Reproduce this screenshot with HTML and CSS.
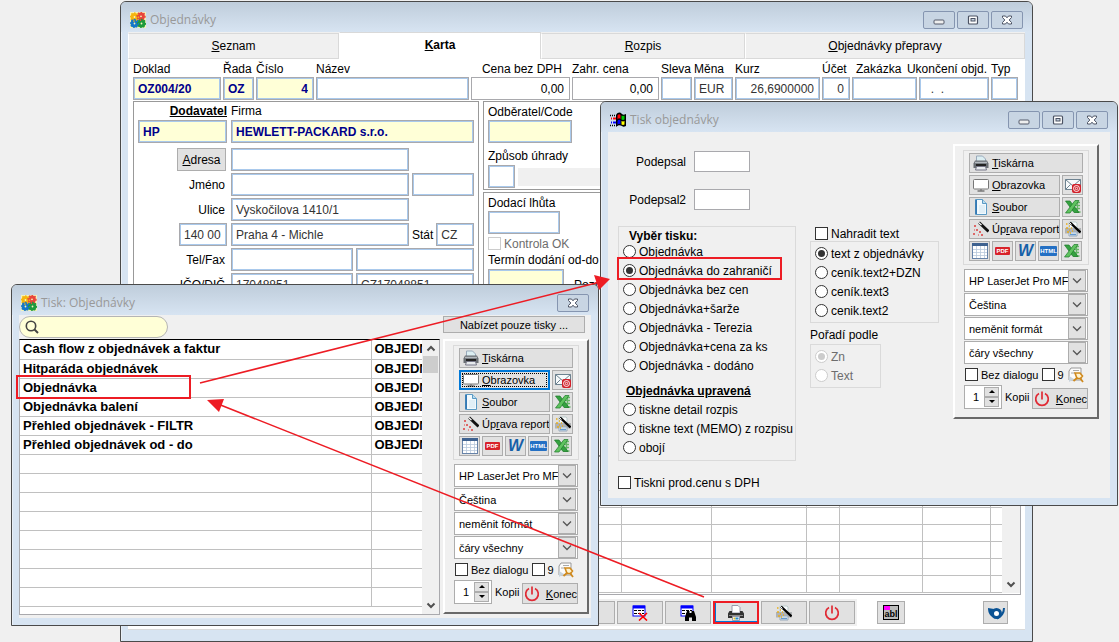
FILE: index.html
```html
<!DOCTYPE html>
<html lang="cs">
<head>
    <meta charset="UTF-8">
    <meta name="viewport" content="width=device-width, initial-scale=1.0">
    <title>Objednávky</title>
    <link rel="stylesheet" href="styles.css">
</head>
<body>

<!-- shared icons -->
<svg class="sprite" aria-hidden="true">
    <symbol id="i-app" viewBox="0 0 16 16">
        <rect width="16" height="16" fill="#f6f3b8"/>
        <g fill="none" stroke-width="3">
            <circle cx="4.5" cy="5" r="2.4" stroke="#f5b50f"/>
            <circle cx="11" cy="4.3" r="2.4" stroke="#e8453c"/>
            <circle cx="4.5" cy="11.5" r="2.4" stroke="#1477c9"/>
            <circle cx="11.5" cy="11.5" r="2.4" stroke="#1d9a3c"/>
        </g>
        <g fill="none" stroke-width="1.4" stroke-dasharray="1.4 1.6">
            <circle cx="4.5" cy="5" r="4" stroke="#f5b50f"/>
            <circle cx="11" cy="4.3" r="4" stroke="#e8453c"/>
            <circle cx="4.5" cy="11.5" r="4" stroke="#1477c9"/>
            <circle cx="11.5" cy="11.5" r="4" stroke="#1d9a3c"/>
        </g>
    </symbol>
    <symbol id="i-win" viewBox="0 0 16 16">
        <path d="M6 3c2-3 4-3 6-1 1 1 2 1 4 0v12c-2 1-3 1-4 0-2-1-4-1-6 1z" fill="#000"/>
        <path d="M7.500 3.500c1-1.500 2-1.500 3-.5v4c-1-1-2-1-3 .5z" fill="#f00"/>
        <path d="M11.500 3.500c1 .6 2 .6 3 0v4c-1 .6-2 .6-3 0z" fill="#0c0"/>
        <path d="M7.500 9c1-1.500 2-1.500 3-.5v4c-1-1-2-1-3 .5z" fill="#00f"/>
        <path d="M11.500 9c1 .6 2 .6 3 0v3.500c-1 .6-2 .6-3 0z" fill="#ff0"/>
        <path d="M0 3.500h6M0 13.500h6" stroke="#000" stroke-width="1.500" stroke-dasharray="1 1"/>
        <path d="M1 6.500h5" stroke="#f00" stroke-width="2" stroke-dasharray="1 1 3 1"/>
        <path d="M1 10.500h5" stroke="#00f" stroke-width="2" stroke-dasharray="1 1 3 1"/>
    </symbol>
    <symbol id="i-min" viewBox="0 0 12 10">
        <rect x="1" y="5" width="10" height="4" rx="1" fill="#eee" stroke="#555b6b"/>
    </symbol>
    <symbol id="i-max" viewBox="0 0 12 10">
        <rect x="1.500" y="1" width="9" height="8" rx="1" fill="#fff" stroke="#4b5263" stroke-width="1.200"/>
        <rect x="4" y="3.500" width="4" height="2.500" fill="#c5d2e0" stroke="#4b5263"/>
    </symbol>
    <symbol id="i-close" viewBox="0 0 12 10">
        <path d="M1.500 1h3L6 2.800 7.500 1h3v1.500L8.200 5l2.300 2.500V9h-3L6 7.200 4.500 9h-3V7.500L3.800 5 1.500 2.500z" fill="#fff" stroke="#4b5263"/>
    </symbol>
    <symbol id="i-down" viewBox="0 0 10 6"><path d="M1 1l4 4 4-4" fill="none" stroke="#555" stroke-width="1.300"/></symbol>
    <symbol id="i-scroll-down" viewBox="0 0 10 7"><path d="M1.500 1.500L5 5l3.500-3.500" fill="none" stroke="#505050" stroke-width="2"/></symbol>
    <symbol id="i-scroll-up" viewBox="0 0 10 7"><path d="M1.500 5.500L5 2l3.500 3.500" fill="none" stroke="#505050" stroke-width="2"/></symbol>
    <symbol id="i-search" viewBox="0 0 14 14">
        <circle cx="6" cy="6" r="4.700" fill="none" stroke="#444" stroke-width="1.600"/>
        <path d="M9.500 9.500l3.500 3.500" stroke="#444" stroke-width="2"/>
    </symbol>
    <symbol id="i-printer" viewBox="0 0 16 16">
        <path d="M3.500 1h6l3 3v4h-9z" fill="#dceef2" stroke="#9ab"/>
        <path d="M2 5.500h12l1.500 3V13H.5V8.500z" fill="#6a6f74"/>
        <path d="M2 7.500h12" stroke="#b5bbc0" stroke-width="1.500"/>
        <rect x="3" y="9" width="10" height="2.500" fill="#222"/>
        <path d="M3.500 11.500h9l1 3.500h-11z" fill="#e6eaed" stroke="#778"/>
    </symbol>
    <symbol id="i-printer-dark" viewBox="0 0 16 16">
        <path d="M4 .5h6l2 2V8H4z" fill="#fff" stroke="#99a"/>
        <path d="M1.500 6H4v2h8V6h2.500L16 8.500V13H0V8.500z" fill="#333"/>
        <path d="M1 10.500h14" stroke="#8b8b8b"/>
        <path d="M4.500 11.500h7v4h-7z" fill="#fff" stroke="#99a"/>
        <path d="M5.500 13.500h2" stroke="#e0c020" stroke-width="2"/>
        <path d="M7.500 13.500h3" stroke="#28c" stroke-width="2"/>
    </symbol>
    <symbol id="i-screen" viewBox="0 0 16 16">
        <rect x=".5" y="2.500" width="15" height="9.500" rx="1" fill="#fff" stroke="#777"/>
        <path d="M8 12v2M4.500 14h7" stroke="#777" stroke-width="1.300"/>
    </symbol>
    <symbol id="i-file" viewBox="0 0 16 16">
        <path d="M2.500.5h7l4 4v11h-11z" fill="#f2f9fd" stroke="#5b9ac4"/>
        <path d="M3.200 1v14" stroke="#2b72b0" stroke-width="1.500"/>
        <path d="M9.500.5v4h4" fill="#bcdcee" stroke="#5b9ac4"/>
        <path d="M6 7h6M6 9h6M6 11h6M6 13h6" stroke="#c4dcea" stroke-width=".7"/>
    </symbol>
    <symbol id="i-wand" viewBox="0 0 16 16">
        <path d="M6 1.500l9.500 9" stroke="#111" stroke-width="2.800"/>
        <path d="M5.500 1.500l3 2.500" stroke="#fff" stroke-width="1.200"/>
        <path d="M2 4v2M1 5h2M4 8v2M3 9h2M1 12v2M0 13h2M7 10v2M6 11h2M9 13v2M8 14h2M1 9h1M5 14h1" stroke="#d33" stroke-width=".9"/>
    </symbol>
    <symbol id="i-wand-print" viewBox="0 0 16 16">
        <path d="M4 1h7l1 1v5H4z" fill="#fafcfd" stroke="#bcc"/>
        <path d="M0 7h16v5.500H0z" fill="#b0b3b5"/>
        <path d="M4 11h8v4H4z" fill="#e4eef4" stroke="#9ab"/>
        <path d="M5 13.500h6" stroke="#69c" stroke-width="1.500"/>
        <path d="M1 3h1.500M4 5h1M1 7h2M4 9h1M6 7h1M2 11h2M5 12h1M7 10h1" stroke="#e8ad1a" stroke-width="1.600"/>
        <path d="M5 1.500l10.500 10" stroke="#000" stroke-width="2.400"/>
        <path d="M4.500 1.500l2 2" stroke="#fff"/>
    </symbol>
    <symbol id="i-mail" viewBox="0 0 16 16">
        <path d="M.5 2.500h15v10H.5z" fill="#f7fafb" stroke="#6d8290"/>
        <path d="M.5 2.500L8 9l7.500-6.500M.5 12.500l5-5" fill="none" stroke="#6d8290"/>
        <rect x="7" y="7" width="9" height="9" rx="2" fill="#d1202a"/>
        <circle cx="11.500" cy="11.500" r="3" fill="none" stroke="#fff" stroke-width=".9"/>
        <circle cx="11.500" cy="11.500" r="1.200" fill="none" stroke="#fff" stroke-width=".8"/>
    </symbol>
    <symbol id="i-excel" viewBox="0 0 16 16">
        <path d="M10 3.500h5M10 6.500h5M10 9.500h5M10 13h5.500M12.500 2v12" stroke="#65b665" stroke-width="1.300"/>
        <path d="M.5 2H5l9 11.500H9z" fill="#35a241" stroke="#1c7a2a" stroke-width=".7"/>
        <path d="M10 1.500h4L5 14H.5z" fill="#5fc35f" stroke="#1c7a2a" stroke-width=".7"/>
    </symbol>
    <symbol id="i-grid" viewBox="0 0 16 16">
        <rect x=".5" y=".5" width="15" height="15" fill="#fff" stroke="#6783a8"/>
        <path d="M0 1.500h16" stroke="#3f6290" stroke-width="3"/>
        <path d="M1 6.500h14M1 9.500h14M1 12.500h14M4.500 3v12M8.500 3v12M12.500 3v12" stroke="#b9c9dc" stroke-width=".8"/>
    </symbol>
    <symbol id="i-key" viewBox="0 0 16 16">
        <path d="M3 1h10v12H1V4z" fill="#fbfbfb" stroke="#999"/>
        <path d="M5 3.500h6M3 6h4" stroke="#aaa"/>
        <path d="M1 9l5 3-5 3z" fill="#c9d4dd"/>
        <path d="M7 6h5l2.500 3-2 2.500H9z" fill="#fff3d0" stroke="#d08a1e" stroke-width="1.600"/>
        <path d="M9.500 10.500L5.500 14M12 11l3 4" stroke="#d08a1e" stroke-width="1.800"/>
    </symbol>
    <symbol id="i-power" viewBox="0 0 16 16">
        <path d="M5 2.600a6.300 6.300 0 1 0 6 0" fill="none" stroke="#e02b35" stroke-width="1.700"/>
        <path d="M8 .5v8" stroke="#e02b35" stroke-width="1.700"/>
    </symbol>
    <symbol id="i-row-del" viewBox="0 0 16 16">
        <rect x="1" y="1" width="12" height="10" fill="#fff" stroke="#00f"/>
        <path d="M1 2h12" stroke="#00f" stroke-width="3"/>
        <path d="M2 5.500h10M2 8.500h10" stroke="#000" stroke-dasharray="3 1"/>
        <path d="M7 8l8 7.500M15 8l-8 7.500" stroke="#f00" stroke-width="1.600"/>
    </symbol>
    <symbol id="i-row-find" viewBox="0 0 16 16">
        <rect x="1" y="1" width="12" height="10" fill="#fff" stroke="#00f"/>
        <path d="M1 2h12" stroke="#00f" stroke-width="3"/>
        <path d="M2 5.500h10M2 8.500h10" stroke="#000" stroke-dasharray="3 1"/>
        <path d="M7 6h2.500v2h2V6H14l2 6v4h-4v-3.500H9V16H5v-4z" fill="#000"/>
    </symbol>
    <symbol id="i-post" viewBox="0 0 18 16">
        <circle cx="9.500" cy="8.500" r="4" fill="#fff" stroke="#0b5394" stroke-width="3"/>
        <path d="M1 3l6 1-1 8C3 11 1 8 1 3z" fill="#0b5394"/>
        <path d="M17 3c0 5-2 8-7 10.500" fill="none" stroke="#0b5394" stroke-width="2"/>
    </symbol>
</svg>

<div class="desktop">

    <!-- orders -->
    <section class="window orders">
        <header class="titlebar">
            <svg class="icon"><use href="#i-app"/></svg>
            <h1>Objednávky</h1>
            <button type="button" class="win-btn" aria-label="Minimalizovat"><svg><use href="#i-min"/></svg></button>
            <button type="button" class="win-btn" aria-label="Maximalizovat"><svg><use href="#i-max"/></svg></button>
            <button type="button" class="win-btn" aria-label="Zavřít"><svg><use href="#i-close"/></svg></button>
        </header>
        <nav class="tabs">
            <button type="button" class="tab tab-seznam"><u>S</u>eznam</button>
            <button type="button" class="tab tab-karta active"><u>K</u>arta</button>
            <button type="button" class="tab tab-rozpis"><u>R</u>ozpis</button>
            <button type="button" class="tab tab-prepravy"><u>O</u>bjednávky přepravy</button>
        </nav>
        <div class="card">
            <div class="head-fields">
                <div class="field"><label for="doklad">Doklad</label><input type="text" id="doklad" class="key" value="OZ004/20"></div>
                <div class="field"><label for="rada">Řada</label><input type="text" id="rada" class="key" value="OZ"></div>
                <div class="field"><label for="cislo">Číslo</label><input type="text" id="cislo" class="key num" value="4"></div>
                <div class="field"><label for="nazev">Název</label><input type="text" id="nazev"></div>
                <div class="field price"><label for="cena">Cena bez DPH</label><input type="text" id="cena" class="num plain" value="0,00"></div>
                <div class="field"><label for="zahr">Zahr. cena</label><input type="text" id="zahr" class="num plain" value="0,00"></div>
                <div class="field"><label for="sleva">Sleva</label><input type="text" id="sleva"></div>
                <div class="field"><label for="mena">Měna</label><input type="text" id="mena" value="EUR"></div>
                <div class="field"><label for="kurz">Kurz</label><input type="text" id="kurz" class="num" value="26,6900000"></div>
                <div class="field"><label for="ucet">Účet</label><input type="text" id="ucet" class="num" value="0"></div>
                <div class="field order-no"><label for="zakazka">Zakázka</label><input type="text" id="zakazka"></div>
                <div class="field end"><label for="ukonceni">Ukončení objd.</label><input type="text" id="ukonceni" value="  .  ."></div>
                <div class="field"><label for="typ">Typ</label><input type="text" id="typ"></div>
            </div>

            <div class="panels">
                <div class="panel supplier">
                    <div class="row captions"><b class="lead"><u>Dodavatel</u></b><label for="firma">Firma</label></div>
                    <div class="row company">
                        <input type="text" class="lead key" aria-label="Dodavatel" value="HP">
                        <input type="text" class="grow key" id="firma" value="HEWLETT-PACKARD s.r.o.">
                    </div>
                    <div class="row">
                        <span class="lead"><button type="button" class="btn address"><u>A</u>dresa</button></span>
                        <input type="text" class="wide" aria-label="Adresa">
                    </div>
                    <div class="row">
                        <label class="lead" for="jmeno">Jméno</label>
                        <input type="text" class="wide" id="jmeno">
                        <input type="text" class="grow" aria-label="Titul">
                    </div>
                    <div class="row">
                        <label class="lead" for="ulice">Ulice</label>
                        <input type="text" class="wide" id="ulice" value="Vyskočilova 1410/1">
                    </div>
                    <div class="row">
                        <span class="lead"><input type="text" class="zip" aria-label="PSČ" value="140 00"></span>
                        <input type="text" class="wide" aria-label="Město" value="Praha 4 - Michle">
                        <label for="stat">Stát</label>
                        <input type="text" class="state" id="stat" value="CZ">
                    </div>
                    <div class="row">
                        <label class="lead" for="tel">Tel/Fax</label>
                        <input type="text" class="half" id="tel">
                        <input type="text" class="grow" aria-label="Fax">
                    </div>
                    <div class="row">
                        <label class="lead" for="ico">IČO/DIČ</label>
                        <input type="text" class="half" id="ico" value="17048851">
                        <input type="text" class="grow" aria-label="DIČ" value="CZ17048851">
                    </div>
                </div>

                <div class="right-panels">
                    <div class="panel customer">
                        <label for="odberatel">Odběratel/Code</label>
                        <input type="text" id="odberatel" class="key">
                        <label class="second" for="uhrada">Způsob úhrady</label>
                        <div class="payment"><input type="text" id="uhrada"><span class="readonly"></span></div>
                    </div>
                    <div class="panel delivery">
                        <label for="lhuta">Dodací lhůta</label>
                        <input type="text" id="lhuta">
                        <label class="check"><input type="checkbox" disabled>Kontrola OK</label>
                        <label for="termin">Termín dodání od-do</label>
                        <div class="term"><input type="text" id="termin" class="key"><span>Poznámka</span></div>
                    </div>
                </div>
            </div>

            <div class="items">
                <table>
                    <colgroup><col><col class="c90"><col class="c95"><col class="c33"><col class="c83"><col class="c68"><col class="c12"></colgroup>
                    <tbody>
                        <tr><td></td><td></td><td></td><td></td><td></td><td></td><td></td></tr>
                        <tr><td></td><td></td><td></td><td></td><td></td><td></td><td></td></tr>
                        <tr><td></td><td></td><td></td><td></td><td></td><td></td><td></td></tr>
                        <tr><td></td><td></td><td></td><td></td><td></td><td></td><td></td></tr>
                        <tr><td></td><td></td><td></td><td></td><td></td><td></td><td></td></tr>
                        <tr><td></td><td></td><td></td><td></td><td></td><td></td><td></td></tr>
                        <tr><td></td><td></td><td></td><td></td><td></td><td></td><td></td></tr>
                        <tr><td></td><td></td><td></td><td></td><td></td><td></td><td></td></tr>
                    </tbody>
                </table>
                <div class="scrollbar"><svg><use href="#i-scroll-up"/></svg><svg class="down"><use href="#i-scroll-down"/></svg></div>
            </div>

            <div class="toolbar">
                <div class="tool-group">
                    <button type="button" class="btn" aria-label="Nový"></button>
                    <button type="button" class="btn" aria-label="Smazat řádek"><svg class="icon"><use href="#i-row-del"/></svg></button>
                    <button type="button" class="btn" aria-label="Najít"><svg class="icon"><use href="#i-row-find"/></svg></button>
                    <button type="button" class="btn marked" aria-label="Tisk"><svg class="icon"><use href="#i-printer-dark"/></svg></button>
                    <button type="button" class="btn" aria-label="Úprava reportu"><svg class="icon"><use href="#i-wand-print"/></svg></button>
                    <button type="button" class="btn" aria-label="Konec"><svg class="icon"><use href="#i-power"/></svg></button>
                </div>
                <button type="button" class="btn tool-abl"><span class="abl">abl</span></button>
                <button type="button" class="btn tool-post" aria-label="Pošta"><svg class="icon"><use href="#i-post"/></svg></button>
            </div>
        </div>
    </section>

    <!-- print options for an order -->
    <section class="window options">
        <header class="titlebar">
            <svg class="icon"><use href="#i-win"/></svg>
            <h1>Tisk objednávky</h1>
            <button type="button" class="win-btn" aria-label="Minimalizovat"><svg><use href="#i-min"/></svg></button>
            <button type="button" class="win-btn" aria-label="Maximalizovat"><svg><use href="#i-max"/></svg></button>
            <button type="button" class="win-btn" aria-label="Zavřít"><svg><use href="#i-close"/></svg></button>
        </header>
        <div class="options-body">
            <form class="options-form">
                <div class="sign"><label for="podepsal">Podepsal</label><input type="text" id="podepsal" class="plain"></div>
                <div class="sign"><label for="podepsal2">Podepsal2</label><input type="text" id="podepsal2" class="plain"></div>
                <div class="choices">
                    <div class="group reports">
                        <b class="group-title">Vyběr tisku:</b>
                        <label class="check"><input type="radio" name="tisk">Objednávka</label>
                        <label class="check"><input type="radio" name="tisk" checked>Objednávka do zahraničí</label>
                        <label class="check"><input type="radio" name="tisk">Objednávka bez cen</label>
                        <label class="check"><input type="radio" name="tisk">Objednávka+šarže</label>
                        <label class="check"><input type="radio" name="tisk">Objednávka - Terezia</label>
                        <label class="check"><input type="radio" name="tisk">Objednávka+cena za ks</label>
                        <label class="check"><input type="radio" name="tisk">Objednávka - dodáno</label>
                        <b class="group-sub"><u>Objednávka upravená</u></b>
                        <label class="check"><input type="radio" name="tisk">tiskne detail rozpis</label>
                        <label class="check"><input type="radio" name="tisk">tiskne text (MEMO) z rozpisu</label>
                        <label class="check"><input type="radio" name="tisk">obojí</label>
                    </div>
                    <div class="texts">
                        <label class="check replace"><input type="checkbox">Nahradit text</label>
                        <div class="group">
                            <label class="check"><input type="radio" name="text" checked>text z objednávky</label>
                            <label class="check"><input type="radio" name="text">ceník.text2+DZN</label>
                            <label class="check"><input type="radio" name="text">ceník.text3</label>
                            <label class="check"><input type="radio" name="text">cenik.text2</label>
                        </div>
                        <span class="sort-title">Pořadí podle</span>
                        <div class="group sort">
                            <label class="check"><input type="radio" name="sort" checked disabled>Zn</label>
                            <label class="check"><input type="radio" name="sort" disabled>Text</label>
                        </div>
                    </div>
                </div>
                <label class="check vat"><input type="checkbox">Tiskni prod.cenu s DPH</label>
            </form>

            <div class="printer">
                <div class="group outputs">
                    <div class="out-row"><button type="button" class="btn out"><svg class="icon"><use href="#i-printer"/></svg><span><u>T</u>iskárna</span></button></div>
                    <div class="out-row">
                        <button type="button" class="btn out"><svg class="icon"><use href="#i-screen"/></svg><span><u>O</u>brazovka</span></button>
                        <button type="button" class="btn small" aria-label="E-mail"><svg class="icon"><use href="#i-mail"/></svg></button>
                    </div>
                    <div class="out-row">
                        <button type="button" class="btn out"><svg class="icon"><use href="#i-file"/></svg><span><u>S</u>oubor</span></button>
                        <button type="button" class="btn small" aria-label="Excel"><svg class="icon"><use href="#i-excel"/></svg></button>
                    </div>
                    <div class="out-row">
                        <button type="button" class="btn out"><svg class="icon"><use href="#i-wand"/></svg><span>Úp<u>r</u>ava report</span></button>
                        <button type="button" class="btn small" aria-label="Úprava tisku"><svg class="icon"><use href="#i-wand-print"/></svg></button>
                    </div>
                    <div class="out-row">
                        <button type="button" class="btn small" aria-label="Tabulka"><svg class="icon"><use href="#i-grid"/></svg></button>
                        <button type="button" class="btn small"><span class="badge pdf">PDF</span></button>
                        <button type="button" class="btn small"><span class="badge word">W</span></button>
                        <button type="button" class="btn small"><span class="badge html">HTML</span></button>
                        <button type="button" class="btn small" aria-label="Excel"><svg class="icon"><use href="#i-excel"/></svg></button>
                    </div>
                </div>
                <div class="selects">
                    <div class="select"><select aria-label="Tiskárna"><option>HP LaserJet Pro MFP</option></select><svg><use href="#i-down"/></svg></div>
                    <div class="select"><select aria-label="Jazyk"><option>Čeština</option></select><svg><use href="#i-down"/></svg></div>
                    <div class="select"><select aria-label="Formát"><option>neměnit formát</option></select><svg><use href="#i-down"/></svg></div>
                    <div class="select"><select aria-label="Čáry"><option>čáry všechny</option></select><svg><use href="#i-down"/></svg></div>
                </div>
                <div class="flags">
                    <label class="check"><input type="checkbox">Bez dialogu</label>
                    <label class="check"><input type="checkbox">9</label>
                    <svg class="icon"><use href="#i-key"/></svg>
                </div>
                <div class="copies">
                    <div class="spinner">
                        <input type="text" id="kopii1" value="1">
                        <span class="spin"><button type="button" aria-label="Více" class="up"></button><button type="button" aria-label="Méně" class="less"></button></span>
                    </div>
                    <label for="kopii1">Kopii</label>
                    <button type="button" class="btn quit"><svg class="icon"><use href="#i-power"/></svg><span><u>K</u>onec</span></button>
                </div>
            </div>
        </div>
    </section>

    <!-- list of reports -->
    <section class="window reports-list">
        <header class="titlebar">
            <svg class="icon"><use href="#i-app"/></svg>
            <h1>Tisk: Objednávky</h1>
            <button type="button" class="win-btn" aria-label="Zavřít"><svg><use href="#i-close"/></svg></button>
        </header>
        <div class="list-body">
            <div class="list-side">
                <div class="search"><svg><use href="#i-search"/></svg><input type="text" aria-label="Hledat"></div>
                <div class="list">
                    <table>
                        <colgroup><col><col class="c51"></colgroup>
                        <tbody>
                            <tr><td>Cash flow z objednávek a faktur</td><td>OBJEDN</td></tr>
                            <tr><td>Hitparáda objednávek</td><td>OBJEDN</td></tr>
                            <tr><td>Objednávka</td><td>OBJEDN</td></tr>
                            <tr><td>Objednávka balení</td><td>OBJEDN</td></tr>
                            <tr><td>Přehled objednávek - FILTR</td><td>OBJEDN</td></tr>
                            <tr><td>Přehled objednávek od - do</td><td>OBJEDN</td></tr>
                            <tr><td></td><td></td></tr>
                            <tr><td></td><td></td></tr>
                            <tr><td></td><td></td></tr>
                            <tr><td></td><td></td></tr>
                            <tr><td></td><td></td></tr>
                            <tr><td></td><td></td></tr>
                            <tr><td></td><td></td></tr>
                            <tr><td></td><td></td></tr>
                        </tbody>
                    </table>
                    <div class="scrollbar"><svg><use href="#i-scroll-up"/></svg><span class="thumb"></span><svg class="down"><use href="#i-scroll-down"/></svg></div>
                </div>
            </div>
            <div class="print-side">
                <button type="button" class="btn offer">Nabízet pouze tisky ...</button>
                <div class="printer">
                    <div class="group outputs">
                        <div class="out-row"><button type="button" class="btn out"><svg class="icon"><use href="#i-printer"/></svg><span><u>T</u>iskárna</span></button></div>
                        <div class="out-row">
                            <button type="button" class="btn out focused"><svg class="icon"><use href="#i-screen"/></svg><span><u>O</u>brazovka</span></button>
                            <button type="button" class="btn small" aria-label="E-mail"><svg class="icon"><use href="#i-mail"/></svg></button>
                        </div>
                        <div class="out-row">
                            <button type="button" class="btn out"><svg class="icon"><use href="#i-file"/></svg><span><u>S</u>oubor</span></button>
                            <button type="button" class="btn small" aria-label="Excel"><svg class="icon"><use href="#i-excel"/></svg></button>
                        </div>
                        <div class="out-row">
                            <button type="button" class="btn out"><svg class="icon"><use href="#i-wand"/></svg><span>Úp<u>r</u>ava report</span></button>
                            <button type="button" class="btn small" aria-label="Úprava tisku"><svg class="icon"><use href="#i-wand-print"/></svg></button>
                        </div>
                        <div class="out-row">
                            <button type="button" class="btn small" aria-label="Tabulka"><svg class="icon"><use href="#i-grid"/></svg></button>
                            <button type="button" class="btn small"><span class="badge pdf">PDF</span></button>
                            <button type="button" class="btn small"><span class="badge word">W</span></button>
                            <button type="button" class="btn small"><span class="badge html">HTML</span></button>
                            <button type="button" class="btn small" aria-label="Excel"><svg class="icon"><use href="#i-excel"/></svg></button>
                        </div>
                    </div>
                    <div class="selects">
                        <div class="select"><select aria-label="Tiskárna"><option>HP LaserJet Pro MFP</option></select><svg><use href="#i-down"/></svg></div>
                        <div class="select"><select aria-label="Jazyk"><option>Čeština</option></select><svg><use href="#i-down"/></svg></div>
                        <div class="select"><select aria-label="Formát"><option>neměnit formát</option></select><svg><use href="#i-down"/></svg></div>
                        <div class="select"><select aria-label="Čáry"><option>čáry všechny</option></select><svg><use href="#i-down"/></svg></div>
                    </div>
                    <div class="flags">
                        <label class="check"><input type="checkbox">Bez dialogu</label>
                        <label class="check"><input type="checkbox">9</label>
                        <svg class="icon"><use href="#i-key"/></svg>
                    </div>
                    <div class="copies">
                        <div class="spinner">
                            <input type="text" id="kopii2" value="1">
                            <span class="spin"><button type="button" aria-label="Více" class="up"></button><button type="button" aria-label="Méně" class="less"></button></span>
                        </div>
                        <label for="kopii2">Kopii</label>
                        <button type="button" class="btn quit"><svg class="icon"><use href="#i-power"/></svg><span><u>K</u>onec</span></button>
                    </div>
                </div>
            </div>
        </div>
    </section>

    <!-- red marks and arrows over the windows -->
    <svg class="marks" width="1119" height="642" viewBox="0 0 1119 642" aria-hidden="true">
        <g fill="none" stroke="#ed1c24" stroke-width="2">
            <rect x="17" y="376" width="173" height="22"/>
            <rect x="618" y="258" width="163" height="21"/>
            <path d="M200 383L600 282M704 597L218 404" stroke-width="1.500"/>
        </g>
        <path d="M610 279l-16-4 5 15zM207 400l17-1-5 13z" fill="#ed1c24"/>
    </svg>
</div>

</body>
</html>
```
FILE: styles.css
```css
* {
    box-sizing: border-box;
}
body {
    margin: 0;
    background: #f0f0f0;
    font-family: "Liberation Sans", Arial, sans-serif;
    font-size: 12px;
    line-height: 14px;
    color: #000;
}
.sprite {
    position: absolute;
    width: 0;
    height: 0;
}
.desktop {
    position: relative;
    min-height: 642px;
    overflow: hidden;
}
button, input, select {
    font: inherit;
    color: inherit;
    margin: 0;
}
label, b {
    white-space: nowrap;
}
.icon {
    width: 16px;
    height: 16px;
    flex: none;
}

/* windows */
.window {
    position: absolute;
    display: flex;
    flex-direction: column;
    padding: 0 7px 7px;
    background: #d7e4f2;
    border: 1px solid #4a4a4a;
    border-radius: 6px 6px 0 0;
    box-shadow: inset 1px 1px 0 #e8eff7;
}
.orders {
    left: 120px;
    right: 86px;
    top: 1px;
    height: 641px;
}
.options {
    left: 600px;
    top: 101px;
    width: 518px;
    height: 405px;
}
.reports-list {
    left: 11px;
    top: 284px;
    width: 588px;
    height: 342px;
}
.titlebar {
    display: flex;
    align-items: center;
    gap: 2px;
    height: 30px;
    margin: 0 -7px;
    padding: 6px 9px 0;
    border-radius: 5px 5px 0 0;
    background: linear-gradient(#bfcddb, #d7e4f2);
    flex: none;
}
.titlebar h1 {
    flex: 1;
    margin: 0 0 0 2px;
    font: 12px/16px "Open Sans", sans-serif;
    color: #999;
}
.win-btn {
    display: flex;
    align-items: center;
    justify-content: center;
    width: 32px;
    height: 18px;
    padding: 0;
    background: #c8d5e3;
    border: 1px solid #8595b0;
    border-radius: 2px;
}
.win-btn svg {
    width: 12px;
    height: 10px;
}

/* controls */
input[type="text"] {
    height: 23px;
    min-width: 0;
    padding: 0 4px;
    background: #fff;
    border: 1px solid #a9a9ad;
    box-shadow: inset 0 0 0 1px #a9c9ec;
    color: #333;
    border-radius: 0;
}
input[type="text"].key {
    background: #ffffd7;
    color: #00008b;
    font-weight: bold;
}
input[type="text"].num {
    text-align: right;
    padding-right: 5px;
}
input[type="text"].plain {
    box-shadow: none;
    color: #000;
}
.btn {
    display: flex;
    align-items: center;
    justify-content: center;
    padding: 0;
    background: #e1e1e1;
    border: 1px solid #adadad;
    overflow: hidden;
    white-space: nowrap;
}
.group {
    border: 1px solid #dadada;
}
.check {
    display: flex;
    align-items: center;
    height: 19px;
    gap: 3px;
}
.check input {
    appearance: none;
    display: grid;
    place-items: center;
    width: 13px;
    height: 13px;
    background: #fff;
    border: 1px solid #333;
    flex: none;
}
.check input[type="radio"] {
    border-radius: 50%;
}
.check input[type="radio"]:checked::before {
    content: "";
    width: 7px;
    height: 7px;
    border-radius: 50%;
    background: #333;
}
.check input:disabled {
    border-color: #ccc;
}
.check input[type="radio"]:disabled:checked::before {
    background: #ccc;
}
.check:has(input:disabled) {
    color: #6d6d6d;
}
.scrollbar {
    display: flex;
    flex-direction: column;
    align-items: center;
    padding: 5px 0;
    background: #f0f0f0;
    width: 17px;
    flex: none;
}
.scrollbar svg {
    width: 10px;
    height: 7px;
}
.scrollbar .down {
    margin-top: auto;
}
.scrollbar .thumb {
    width: 15px;
    height: 17px;
    margin-top: 4px;
    background: #cdcdcd;
}
table {
    border-collapse: collapse;
    table-layout: fixed;
}
td {
    padding: 0;
    border-right: 1px solid #c0c0c0;
    border-bottom: 1px solid #c0c0c0;
    overflow: hidden;
    white-space: nowrap;
}
td:last-child {
    border-right: 0;
}

/* orders window */
.tabs {
    display: flex;
    align-items: flex-end;
    height: 27px;
    background: #f0f0f0;
    flex: none;
}
.tab {
    height: 26px;
    padding: 0;
    background: #f0f0f0;
    border: 1px solid #d9d9d9;
    border-left-color: #fff;
}
.tab.active {
    height: 27px;
    padding-bottom: 3px;
    background: #fff;
    border-bottom: 0;
    font-weight: bold;
}
.tab-seznam {
    width: 211px;
}
.tab-karta {
    width: 202px;
}
.tab-rozpis {
    width: 204px;
}
.tab-prepravy {
    flex: 1;
}
.card {
    flex: 1;
    display: flex;
    flex-direction: column;
    margin-bottom: 4px;
    padding: 3px 4px 3px 5px;
    background: #fff;
    border-bottom: 1px solid #dadada;
}
.head-fields {
    display: grid;
    grid-template-columns: 88px 31px 58px 1fr 99px 87px 31px 39px 85px 28px 65px 70px 27px;
    gap: 2px;
    padding-right: 3px;
}
.field {
    display: flex;
    flex-direction: column;
    min-width: 0;
}
.field label {
    height: 15px;
}
.price label {
    text-align: right;
    padding-right: 8px;
}
.order-no label {
    padding-left: 4px;
}
.end label {
    align-self: flex-end;
    padding-right: 2px;
}
#ukonceni {
    white-space: pre;
}
.panels {
    display: flex;
    gap: 4px;
    flex: 1;
    margin-top: 1px;
}
.panel {
    border: 1px solid #999;
}
.supplier {
    display: flex;
    flex-direction: column;
    gap: 2px;
    width: 346px;
    padding: 2px 4px;
}
.row {
    display: flex;
    align-items: center;
    gap: 3px;
}
.row .lead {
    display: flex;
    justify-content: flex-end;
    width: 89px;
    margin-right: 1px;
}
.row label.lead {
    padding-right: 2px;
}
.captions {
    height: 14px;
}
.company {
    margin-bottom: 3px;
}
.row .grow {
    flex: 1;
}
.row .wide {
    width: 178px;
}
.row .half {
    width: 122px;
}
.address {
    width: 49px;
    height: 23px;
    margin-right: 1px;
}
.zip {
    width: 48px;
}
.state {
    flex: 1;
}
.right-panels {
    flex: 1;
    display: flex;
    flex-direction: column;
    gap: 2px;
}
.right-panels .panel {
    display: flex;
    flex-direction: column;
    align-items: flex-start;
    padding: 3px 4px 1px;
}
.customer .key {
    width: 84px;
    margin-top: 1px;
}
.customer .second {
    margin: 6px 0 2px;
}
.payment {
    display: flex;
    align-items: center;
    gap: 3px;
    width: 100%;
}
.payment input {
    width: 27px;
}
.readonly {
    flex: 1;
    height: 18px;
    background: #f0f0f0;
}
.delivery {
    flex: 1;
}
.delivery #lhuta {
    width: 72px;
    margin-top: 1px;
}
.term {
    display: flex;
    gap: 10px;
    align-items: flex-end;
    margin-top: 2px;
}
.term .key {
    width: 76px;
}
.items {
    display: flex;
    padding-bottom: 1px;
    border: 1px solid #a9a9ad;
}
.items table {
    flex: 1;
    width: 100%;
}
.items td {
    height: 17px;
}
.items .scrollbar {
    width: 18px;
}
.c90 { width: 90px; }
.c95 { width: 95px; }
.c33 { width: 33px; }
.c83 { width: 83px; }
.c68 { width: 68px; }
.c12 { width: 12px; }
.c51 { width: 51px; }
.toolbar {
    display: flex;
    align-items: center;
    justify-content: flex-end;
    margin-top: 4px;
    padding-right: 13px;
}
.tool-group {
    display: flex;
    gap: 2px;
    padding: 2px;
    background: #f0f0f0;
}
.toolbar .btn {
    width: 46px;
    height: 23px;
}
.toolbar .marked {
    border: 2px solid #ed1c24;
    box-shadow: inset 1px -1px 0 #0078d7;
}
.toolbar .tool-abl {
    width: 28px;
    margin-left: 20px;
}
.toolbar .tool-post {
    width: 25px;
    margin-left: 78px;
}
.tool-post .icon {
    width: 18px;
}
.abl {
    width: 16px;
    height: 15px;
    padding-top: 3px;
    background: linear-gradient(#f0f, #f0f) 0 0 / 6px 4px no-repeat #bbb;
    border: 1px solid #000;
    font: bold 9px/10px "Liberation Sans", sans-serif;
}

/* print options window */
.options-body {
    flex: 1;
    display: flex;
    background: #f0f0f0;
}
.options-form {
    flex: 1;
    padding: 19px 0 0 10px;
}
.sign {
    display: flex;
    align-items: center;
    gap: 8px;
    margin-bottom: 17px;
}
.sign label {
    width: 68px;
    text-align: right;
}
.sign input[type="text"] {
    width: 56px;
    height: 21px;
}
.choices {
    display: flex;
    gap: 14px;
    margin-top: -1px;
}
.reports {
    width: 178px;
    height: 235px;
    padding: 1px 4px;
}
.group-title {
    display: block;
    height: 14px;
    padding: 1px 6px 0;
}
.group-sub {
    display: block;
    height: 25px;
    padding: 9px 3px 0;
}
.texts {
    width: 129px;
}
.texts .group {
    padding: 2px 4px;
}
.replace {
    height: 15px;
    padding-left: 5px;
}
.sort-title {
    display: block;
    margin: 5px 0 2px;
}
.texts .sort {
    width: 71px;
}
.vat {
    margin-top: 12px;
}

/* printer panel */
.printer {
    width: 146px;
    height: 275px;
    padding: 4px 8px;
    border: 2px solid;
    border-color: #fff #696969 #696969 #fff;
    font-size: 11px;
}
.options .printer {
    margin: 12px 11px 0 0;
}
.outputs {
    display: flex;
    flex-direction: column;
    gap: 2px;
    padding: 2px 5px;
    height: 115px;
    width: 126px;
}
.out-row {
    display: flex;
    gap: 2px;
    height: 20px;
}
.out {
    flex: 1;
    min-width: 0;
    justify-content: flex-start;
    gap: 3px;
    padding-left: 3px;
}
.small {
    width: 21px;
    flex: none;
}
.focused {
    border: 2px solid #0078d7;
    padding-left: 2px;
    outline: 1px dotted #000;
    outline-offset: -4px;
}
.badge {
    display: block;
    color: #fff;
    font: bold 6px/8px "Liberation Sans", sans-serif;
    text-align: center;
}
.pdf {
    width: 15px;
    background: #d8222a;
    border-radius: 1px;
}
.word {
    color: #1660a8;
    font: italic bold 16px/18px "Liberation Sans", sans-serif;
}
.html {
    width: 17px;
    font-size: 6px;
    line-height: 10px;
    background: #2470c4;
    border-radius: 1px;
}
.selects {
    display: flex;
    flex-direction: column;
    gap: 1px;
    width: 124px;
    margin: 4px 0 0 1px;
}
.select {
    position: relative;
    height: 23px;
}
.select select {
    appearance: none;
    width: 100%;
    height: 100%;
    padding: 0 18px 0 4px;
    background: #fff;
    border: 1px solid #adadad;
    border-radius: 0;
}
.select svg {
    position: absolute;
    top: 1px;
    right: 2px;
    width: 18px;
    height: 21px;
    padding: 6px 3px;
    background: #e1e1e1;
    border: 1px solid #adadad;
    pointer-events: none;
}
.flags {
    display: flex;
    align-items: center;
    gap: 3px;
    margin: 1px 0 0 2px;
}
.flags .icon {
    margin-left: 1px;
}
.copies {
    display: flex;
    align-items: center;
    gap: 3px;
    margin: 0 -2px 0 1px;
}
.spinner {
    display: flex;
    align-items: center;
    width: 38px;
    height: 24px;
    background: #fff;
    border: 1px solid #adadad;
    flex: none;
}
.spinner input[type="text"] {
    width: 19px;
    height: 20px;
    padding: 0 5px 0 0;
    border: 0;
    box-shadow: none;
    text-align: right;
    color: #000;
}
.spin {
    display: grid;
    width: 15px;
}
.spin button {
    display: grid;
    place-items: center;
    height: 10px;
    padding: 0;
    background: #e1e1e1;
    border: 1px solid #adadad;
}
.spin button::before {
    content: "";
    border: 3px solid transparent;
    border-top-width: 0;
    border-bottom-color: #000;
}
.spin .less::before {
    border-top: 3px solid #000;
    border-bottom: 0;
}
.quit {
    width: 56px;
    height: 21px;
    gap: 6px;
    margin-top: 4px;
}

/* report list window */
.list-body {
    flex: 1;
    display: flex;
    gap: 3px;
    padding: 0 2px 3px 0;
    background: #f0f0f0;
}
.list-side {
    flex: 1;
    display: flex;
    flex-direction: column;
}
.search {
    display: flex;
    align-items: center;
    width: 149px;
    height: 22px;
    margin: 1px 0;
    padding: 0 5px;
    background: #ffffd7;
    border: 1px solid #b5b5b5;
    border-radius: 11px;
}
.search svg {
    width: 14px;
    height: 14px;
}
.search input[type="text"] {
    flex: 1;
    height: 18px;
    background: none;
    border: 0;
    box-shadow: none;
}
.list {
    flex: 1;
    display: flex;
    background: #fff;
    border: 1px solid #a9a9ad;
    border-top-color: #000;
}
.list table {
    flex: 1;
    width: 100%;
    height: 0;
    font-size: 13px;
    font-weight: bold;
}
.list td {
    height: 19px;
    padding-left: 3px;
}
.print-side {
    width: 146px;
    flex: none;
}
.offer {
    width: 142px;
    height: 17px;
    margin: 1px 0 6px;
    font-size: 11px;
}

/* arrows */
.marks {
    position: absolute;
    left: 0;
    top: 0;
    pointer-events: none;
}
```
